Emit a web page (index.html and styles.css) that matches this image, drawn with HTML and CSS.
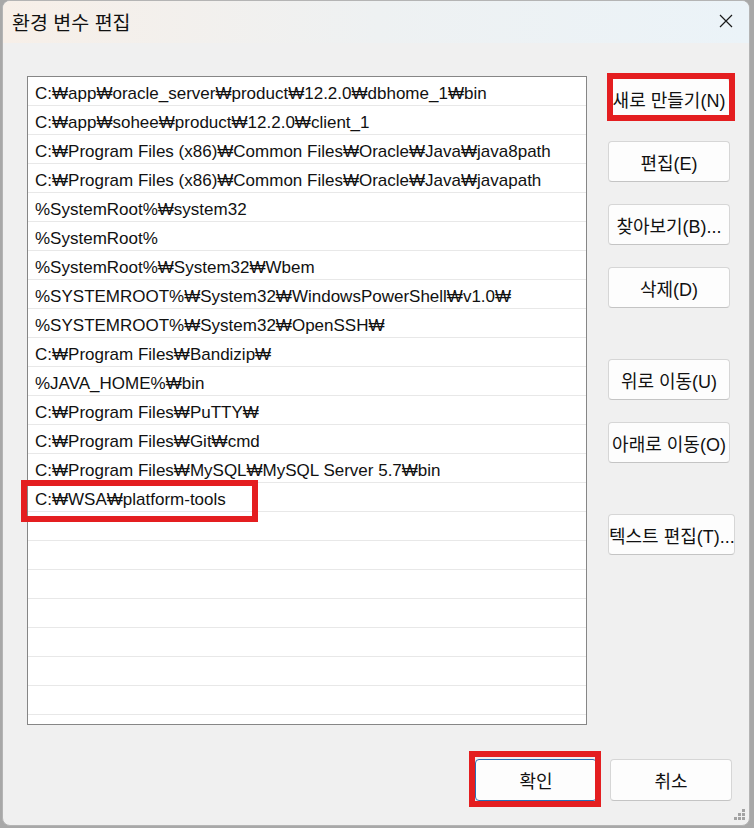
FILE: index.html
```html
<!DOCTYPE html>
<html lang="ko">
<head>
    <meta charset="UTF-8">
    <meta name="viewport" content="width=device-width, initial-scale=1.0">
    <title>환경 변수 편집</title>
    <link rel="stylesheet" href="styles.css">
</head>
<body>
    <div class="window">
        <div class="titlebar">
            <span class="title">환경 변수 편집</span>
            <span class="close">
                <svg width="14" height="14" viewBox="0 0 14 14">
                    <path d="M1 1 L13 13 M13 1 L1 13" stroke="#1a1a1a" stroke-width="1.2" fill="none"/>
                </svg>
            </span>
        </div>

        <div class="content">
            <div class="pathlist">
                <div class="row">C:₩app₩oracle_server₩product₩12.2.0₩dbhome_1₩bin</div>
                <div class="row">C:₩app₩sohee₩product₩12.2.0₩client_1</div>
                <div class="row">C:₩Program Files (x86)₩Common Files₩Oracle₩Java₩java8path</div>
                <div class="row">C:₩Program Files (x86)₩Common Files₩Oracle₩Java₩javapath</div>
                <div class="row">%SystemRoot%₩system32</div>
                <div class="row">%SystemRoot%</div>
                <div class="row">%SystemRoot%₩System32₩Wbem</div>
                <div class="row">%SYSTEMROOT%₩System32₩WindowsPowerShell₩v1.0₩</div>
                <div class="row">%SYSTEMROOT%₩System32₩OpenSSH₩</div>
                <div class="row">C:₩Program Files₩Bandizip₩</div>
                <div class="row">%JAVA_HOME%₩bin</div>
                <div class="row">C:₩Program Files₩PuTTY₩</div>
                <div class="row">C:₩Program Files₩Git₩cmd</div>
                <div class="row">C:₩Program Files₩MySQL₩MySQL Server 5.7₩bin</div>
                <div class="row marked">C:₩WSA₩platform-tools</div>
                <div class="row"></div>
                <div class="row"></div>
                <div class="row"></div>
                <div class="row"></div>
                <div class="row"></div>
                <div class="row"></div>
                <div class="row"></div>
            </div>

            <div class="side">
                <button class="btn marked">새로 만들기(N)</button>
                <button class="btn">편집(E)</button>
                <button class="btn">찾아보기(B)...</button>
                <button class="btn">삭제(D)</button>
                <button class="btn group-start">위로 이동(U)</button>
                <button class="btn">아래로 이동(O)</button>
                <button class="btn btn-wide group-start">텍스트 편집(T)...</button>
            </div>
        </div>

        <div class="footer">
            <button class="btn btn-default marked">확인</button>
            <button class="btn">취소</button>
        </div>

        <!-- 크기 조절 손잡이 -->
        <svg class="grip" width="12" height="12" viewBox="0 0 12 12">
            <rect x="8" y="0" width="3" height="3" fill="#a3a3a3"/>
            <rect x="4" y="4" width="3" height="3" fill="#a3a3a3"/>
            <rect x="8" y="4" width="3" height="3" fill="#a3a3a3"/>
            <rect x="0" y="8" width="3" height="3" fill="#a3a3a3"/>
            <rect x="4" y="8" width="3" height="3" fill="#a3a3a3"/>
            <rect x="8" y="8" width="3" height="3" fill="#a3a3a3"/>
        </svg>
    </div>
</body>
</html>
```

FILE: styles.css
```css
body {
    margin: 0;
    padding: 0;
    background-color: #a8a8a8;
    font-family: "Liberation Sans", "Noto Sans CJK KR", sans-serif;
    color: #111;
}
.window {
    position: relative;
    box-sizing: border-box;
    width: 748px;
    height: 826px;
    margin-left: 2px;
    background-color: #f0f0f0;
    border: 1px solid #b4b4b4;
    border-radius: 8px;
    overflow: hidden;
}
.titlebar {
    display: flex;
    align-items: center;
    justify-content: space-between;
    height: 42px;
    padding: 0 16px 0 9px;
    background: linear-gradient(to right, #f7efe8, #eef1f2 50%, #ebf3f8);
}
.title {
    font-family: "Noto Sans CJK KR", sans-serif;
    font-size: 19.5px;
    padding-bottom: 2px;
}
.close {
    display: flex;
    padding-bottom: 2px;
}
.content {
    display: flex;
    padding: 33px 0 0 24px;
}
.pathlist {
    box-sizing: border-box;
    width: 560px;
    height: 649px;
    background: white;
    border: 1px solid #868686;
}
.row {
    position: relative;
    box-sizing: border-box;
    height: 29px;
    padding: 7px 0 0 7px;
    line-height: 20px;
    font-size: 17px;
    white-space: nowrap;
    border-bottom: 1px solid #e8e8e8;
}
.side {
    display: flex;
    flex-direction: column;
    gap: 22px;
    margin-left: 21px;
    padding-top: 2px;
}
.btn {
    position: relative;
    box-sizing: border-box;
    width: 122px;
    height: 41px;
    padding: 0;
    font-family: inherit;
    font-size: 18px;
    color: #111;
    background: #fdfdfd;
    border: 1px solid #d6d6d6;
    border-bottom-color: #c4c4c4;
    border-radius: 4px;
    white-space: nowrap;
    overflow: visible;
}
.btn-wide {
    width: 127px;
}
.group-start {
    margin-top: 29px;
}
.btn-default {
    border-color: #2a6db3;
}
.footer {
    display: flex;
    justify-content: flex-end;
    gap: 13px;
    padding: 34px 17px 0 0;
}
.footer .btn {
    height: 42px;
}

/* 빨간 표시 상자 */
.marked::after {
    content: "";
    position: absolute;
    box-sizing: border-box;
    border: 6px solid #e41e20;
    pointer-events: none;
}
.row.marked::after {
    top: -3px;
    left: -7px;
    width: 237px;
    height: 42px;
}
.side .btn.marked::after {
    top: -6px;
    left: -2px;
    width: 128px;
    height: 48px;
}
.footer .btn.marked::after {
    top: -9px;
    left: -7px;
    width: 132px;
    height: 56px;
}
.grip {
    position: absolute;
    right: 3px;
    bottom: 4px;
}
```
